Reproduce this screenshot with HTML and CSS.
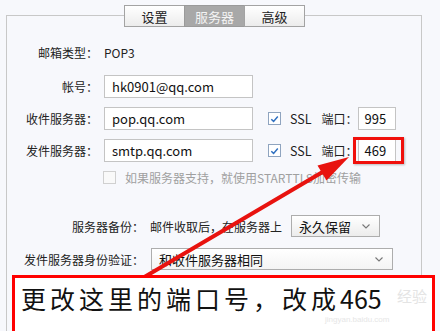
FILE: index.html
```html
<!DOCTYPE html>
<html>
<head>
<meta charset="utf-8">
<link rel="stylesheet" href="styles.css">
</head>
<body>
<div class="panel">
  <div class="tabs">
    <span class="tab">设置</span><span class="tab active">服务器</span><span class="tab">高级</span>
  </div>
  <div class="sec1">
    <div class="row r-type"><span class="lbl">邮箱类型：</span><span class="val">POP3</span></div>
    <div class="row r-acct"><span class="lbl">帐号：</span><div class="input host">hk0901@qq.com</div></div>
    <div class="row r-in"><span class="lbl">收件服务器：</span><div class="input host">pop.qq.com</div>
      <span class="cb checked"><svg viewBox="0 0 12 12" width="12" height="12"><path d="M2.5 6.2 L5 8.6 L9.6 3.2" fill="none" stroke="#2e6fc0" stroke-width="1.6"/></svg></span>
      <span class="ssl">SSL</span><span class="plbl">端口：</span><div class="input port">995</div></div>
    <div class="row r-out"><span class="lbl">发件服务器：</span><div class="input host">smtp.qq.com</div>
      <span class="cb checked"><svg viewBox="0 0 12 12" width="12" height="12"><path d="M2.5 6.2 L5 8.6 L9.6 3.2" fill="none" stroke="#2e6fc0" stroke-width="1.6"/></svg></span>
      <span class="ssl">SSL</span><span class="plbl">端口：</span><div class="port-wrap"><div class="input port">469</div><span class="hl"></span></div></div>
    <div class="row r-tls"><span class="cb disabled"></span><span class="dis">如果服务器支持，就使用STARTTLS加密传输</span></div>
  </div>
  <div class="sec2">
    <div class="row r-bak"><span class="lbl2">服务器备份：</span><span class="val">邮件收取后，在服务器上</span>
      <div class="select s-bak"><span>永久保留</span><svg class="chev" viewBox="0 0 8 5" width="8" height="5"><path d="M0.5 0.5 L4 4 L7.5 0.5" fill="none" stroke="#777" stroke-width="1.1"/></svg></div></div>
    <div class="row r-auth"><span class="lbl2">发件服务器身份验证：</span>
      <div class="select s-auth"><span>和收件服务器相同</span><svg class="chev" viewBox="0 0 8 5" width="8" height="5"><path d="M0.5 0.5 L4 4 L7.5 0.5" fill="none" stroke="#777" stroke-width="1.1"/></svg></div></div>
  </div>
</div>
<svg class="arrow" viewBox="0 0 440 331" width="440" height="331">
  <line x1="141" y1="279" x2="326" y2="170" stroke="#e8130f" stroke-width="4" stroke-linecap="round"/>
  <polygon points="349,157 326.5,180.5 317.5,165.5" fill="#e8130f"/>
</svg>
<div class="note">
  <span class="note-text">更改这里的端口号，改成<span class="num">465</span></span>
  <span class="wm">经验</span>
  <span class="wm-url">jingyan.baidu.com</span>
</div>
</body>
</html>
```
FILE: styles.css
```css
body {
  margin: 0;
  width: 440px;
  height: 331px;
  overflow: hidden;
  position: relative;
  background: #f7f8fc;
  font-family: "Noto Sans CJK SC", "Microsoft YaHei", sans-serif;
  font-size: 12px;
  color: #222;
}
.panel {
  margin: 15px 0 0 6px;
  width: 414px;
  height: 315px;
  border: 1px solid #c8c8c8;
  border-bottom: none;
}
.tabs {
  display: flex;
  justify-content: center;
  margin-top: -11px;
  padding-left: 2px;
}
.tab {
  width: 61px;
  height: 22px;
  box-sizing: border-box;
  border: 1px solid #a3a3a3;
  margin-left: -1px;
  display: flex;
  align-items: center;
  justify-content: center;
  font-size: 13px;
  color: #222;
  background: linear-gradient(#ffffff, #ececec);
}
.tab.active {
  background: #a8a8a8;
  color: #f4f4f4;
  border-color: #9a9a9a;
}
.row {
  display: flex;
  align-items: center;
  height: 23px;
  white-space: nowrap;
}
.lbl {
  width: 91px;
  flex: none;
  text-align: right;
  margin-right: 6px;
}
.r-type { margin-top: 14px; }
.r-acct { margin-top: 11px; }
.r-in, .r-out { margin-top: 9px; }
.r-tls { margin-top: 8px; height: 14px; padding-left: 96px; }
.val { color: #222; }
.input {
  height: 23px;
  box-sizing: border-box;
  border: 1px solid #c4c4c4;
  background: #fff;
  display: flex;
  align-items: center;
  padding-left: 7px;
  font-size: 13px;
  color: #111;
}
.host { width: 149px; flex: none; }
.port { width: 38px; padding-left: 6px; flex: none; }
.cb {
  width: 13px;
  height: 13px;
  box-sizing: border-box;
  border: 1px solid #8fa4bf;
  background: #fff;
  display: inline-flex;
  align-items: center;
  justify-content: center;
  flex: none;
}
.r-in .cb, .r-out .cb { margin-left: 15px; }
.cb.disabled { border-color: #d0d0d0; background: #f9f9f9; }
.ssl { margin-left: 9px; font-size: 12.5px; flex: none; }
.plbl { margin-left: 10px; flex: none; }
.dis { margin-left: 9px; color: #a0a0a0; }
.port-wrap { position: relative; flex: none; }
.hl {
  position: absolute;
  left: -5px;
  top: -2px;
  width: 51px;
  height: 27px;
  box-sizing: border-box;
  border: 3px solid #f0100c;
  box-shadow: 1px 1px 2px rgba(0,0,0,0.25);
}
.sec2 { margin-top: 31px; }
.lbl2 {
  width: 137px;
  flex: none;
  text-align: right;
  margin-right: 6px;
}
.r-bak { height: 22px; }
.r-auth { height: 22px; margin-top: 11px; }
.select {
  height: 22px;
  box-sizing: border-box;
  border: 1px solid #adadad;
  background: linear-gradient(#ffffff, #ececec);
  display: flex;
  align-items: center;
  justify-content: space-between;
  padding: 0 9px 0 7px;
  font-size: 13px;
  color: #111;
  flex: none;
}
.s-bak { width: 89px; margin-left: 9px; }
.s-auth { width: 242px; margin-left: 1px; background: linear-gradient(#ffffff, #f4f4f4); }
.chev { flex: none; }
.arrow {
  position: absolute;
  left: 0;
  top: 0;
  pointer-events: none;
}
.note {
  position: absolute;
  left: 12px;
  top: 275px;
  width: 423px;
  height: 56px;
  box-sizing: border-box;
  border: 3px solid #ff0000;
  border-bottom: none;
  background: #fff;
  overflow: hidden;
}
.note-text {
  position: absolute;
  left: 6px;
  top: 8px;
  font-size: 25px;
  line-height: 24px;
  letter-spacing: 4px;
  color: #111;
  white-space: nowrap;
}
.num { letter-spacing: 0; }
.wm {
  position: absolute;
  left: 382px;
  top: 9px;
  font-size: 15px;
  line-height: 18px;
  color: #e4e4e4;
}
.wm-url {
  position: absolute;
  left: 310px;
  top: 37px;
  font-size: 8px;
  line-height: 9px;
  color: #e6e6e6;
  font-family: "Liberation Sans", sans-serif;
}
```
